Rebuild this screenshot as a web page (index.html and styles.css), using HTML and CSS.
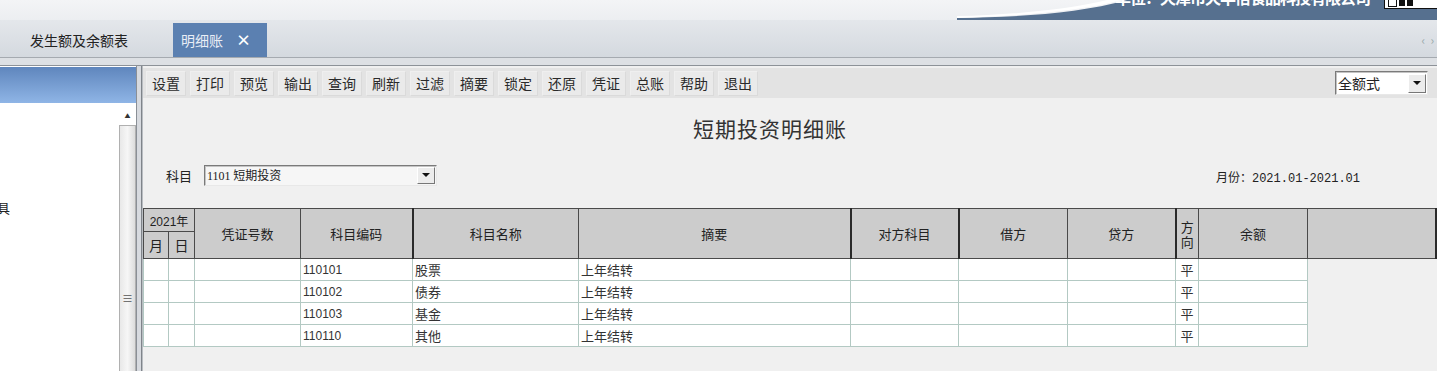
FILE: index.html
```html
<!DOCTYPE html>
<html lang="zh-CN">
<head>
  <meta charset="UTF-8" />
  <title>明细账</title>
  <link rel="stylesheet" href="styles.css">
</head>
<body>

  <div class="top">
    <div class="banner">
      <svg class="swoosh" width="480" height="20" viewBox="0 0 480 20">
        <path d="M0 20 L0 18 C60 17 120 14 170 0 L480 0 L480 20 Z" fill="#56708f"/>
        <path d="M0 18 C60 16 120 12 165 0 L150 0 C110 10 50 15 0 16 Z" fill="#ffffff"/>
      </svg>
      <span class="unit">单位：天津市天丰倍食品科技有限公司</span>
      <span class="winbox"><i class="sq"></i><i class="blk"></i><i class="blk"></i></span>
    </div>
  </div>

  <div class="tabs">
    <span class="tab">发生额及余额表</span>
    <span class="tab active">明细账<b class="close">×</b></span>
    <span class="arrows">‹ &nbsp;› &nbsp;›</span>
  </div>
  <div class="rule"></div>

  <div class="work">
    <div class="side">
      <div class="side-head"></div>
      <div class="side-body">
        <div class="side-list">
          <span class="item">具</span>
        </div>
        <div class="vscroll">
          <div class="up">▲</div>
          <div class="thumb"><span class="grip">≡</span></div>
        </div>
      </div>
    </div>
    <div class="split"></div>

    <div class="main">
      <div class="toolbar">
        <div class="btns">
          <span class="btn">设置</span>
          <span class="btn">打印</span>
          <span class="btn">预览</span>
          <span class="btn">输出</span>
          <span class="btn">查询</span>
          <span class="btn">刷新</span>
          <span class="btn">过滤</span>
          <span class="btn">摘要</span>
          <span class="btn">锁定</span>
          <span class="btn">还原</span>
          <span class="btn">凭证</span>
          <span class="btn">总账</span>
          <span class="btn">帮助</span>
          <span class="btn">退出</span>
        </div>
        <div class="combo mode">
          <span class="combo-text">全额式</span>
          <span class="drop"><i></i></span>
        </div>
      </div>

      <h1 class="title">短期投资明细账</h1>

      <div class="filter">
        <div class="subject">
          <span class="lbl">科目</span>
          <div class="combo acct">
            <span class="combo-text"><span class="num">1101</span> 短期投资</span>
            <span class="drop"><i></i></span>
          </div>
        </div>
        <div class="month">月份：<span class="mono">2021.01-2021.01</span></div>
      </div>

      <table class="ledger">
        <colgroup>
          <col style="width:25px"><col style="width:26px"><col style="width:106px">
          <col style="width:112px"><col style="width:166px"><col style="width:272px">
          <col style="width:108px"><col style="width:109px"><col style="width:108px">
          <col style="width:23px"><col style="width:109px"><col>
        </colgroup>
        <thead>
          <tr class="h1">
            <th colspan="2" class="year">2021年</th>
            <th rowspan="2">凭证号数</th>
            <th rowspan="2" class="thick">科目编码</th>
            <th rowspan="2">科目名称</th>
            <th rowspan="2" class="thick">摘要</th>
            <th rowspan="2" class="thick">对方科目</th>
            <th rowspan="2">借方</th>
            <th rowspan="2" class="thick">贷方</th>
            <th rowspan="2" class="dir">方<br>向</th>
            <th rowspan="2">余额</th>
            <th rowspan="2" class="thick"></th>
          </tr>
          <tr class="h2">
            <th>月</th>
            <th>日</th>
          </tr>
        </thead>
        <tbody>
          <tr><td></td><td></td><td></td><td class="num">110101</td><td>股票</td><td>上年结转</td><td></td><td></td><td></td><td class="c">平</td><td></td><td class="blank"></td></tr>
          <tr><td></td><td></td><td></td><td class="num">110102</td><td>债券</td><td>上年结转</td><td></td><td></td><td></td><td class="c">平</td><td></td><td class="blank"></td></tr>
          <tr><td></td><td></td><td></td><td class="num">110103</td><td>基金</td><td>上年结转</td><td></td><td></td><td></td><td class="c">平</td><td></td><td class="blank"></td></tr>
          <tr><td></td><td></td><td></td><td class="num">110110</td><td>其他</td><td>上年结转</td><td></td><td></td><td></td><td class="c">平</td><td></td><td class="blank"></td></tr>
        </tbody>
      </table>
    </div>
  </div>

</body>
</html>
```

FILE: styles.css
```css
body {
  margin: 0;
  height: 371px;
  overflow: hidden;
  font-family: "Noto Sans CJK SC", "Liberation Sans", sans-serif;
  font-size: 13px;
  color: #222;
  background: #f0f0f0;
}

/* top strip */
.top {
  position: relative;
  height: 20px;
  background: linear-gradient(#f3f4f6, #eceef1);
  overflow: hidden;
}
.banner {
  position: absolute;
  top: 0;
  right: 0;
  width: 480px;
  height: 20px;
  display: flex;
  justify-content: flex-end;
  align-items: flex-start;
}
.swoosh {
  position: absolute;
  left: 0;
  top: 0;
}
.unit {
  position: relative;
  margin-top: -12px;
  margin-right: 14px;
  font-size: 16px;
  font-weight: bold;
  line-height: 18px;
  color: #fff;
  letter-spacing: -1px;
}
.winbox {
  position: relative;
  width: 50px;
  height: 8px;
  margin-right: -2px;
  background: #fff;
  border: 1px solid #111;
  border-top: none;
  display: flex;
  gap: 2px;
  padding-left: 3px;
}
.winbox .sq {
  width: 7px;
  height: 6px;
  border: 1px solid #111;
  border-top: none;
}
.winbox .blk {
  width: 6px;
  height: 6px;
  background: #111;
}

/* tab bar */
.tabs {
  height: 37px;
  background: linear-gradient(#e4e7eb, #d4d9df);
  border-bottom: 1px solid #a5aab0;
  display: flex;
  align-items: flex-end;
  position: relative;
}
.tab {
  height: 34px;
  line-height: 34px;
  font-size: 14px;
  color: #222;
  padding: 0 45px 0 30px;
  white-space: nowrap;
}
.tab.active {
  background: #5b80b1;
  color: #e9eef6;
  padding: 0 16px 0 8px;
}
.close {
  margin-left: 13px;
  font-size: 15px;
  color: #fff;
}
.arrows {
  margin-left: auto;
  margin-right: -6px;
  height: 34px;
  line-height: 34px;
  color: #9aa;
  font-size: 12px;
  white-space: nowrap;
}
.rule {
  height: 7px;
  background: #dde0e4;
  border-bottom: 1px solid #8d9298;
}

/* work area */
.work {
  display: flex;
  height: 305px;
}
.side {
  width: 136px;
  background: #fff;
  border-right: 1px solid #8a8f96;
  display: flex;
  flex-direction: column;
}
.side-head {
  height: 36px;
  margin-top: 1px;
  background: linear-gradient(#5f86bd, #8fb5e6);
}
.side-body {
  flex: 1;
  display: flex;
}
.side-list {
  flex: 1;
  padding-top: 95px;
}
.item {
  margin-left: -3px;
  font-size: 13px;
}
.vscroll {
  width: 17px;
  margin-top: 4px;
  display: flex;
  flex-direction: column;
}
.up {
  height: 18px;
  font-size: 6px;
  line-height: 18px;
  text-align: center;
  color: #333;
}
.thumb {
  flex: 1;
  background: linear-gradient(90deg, #e8e8e8, #f6f6f6 50%, #dcdcdc);
  border: 1px solid #b0b0b0;
  border-bottom: none;
  display: flex;
  justify-content: center;
  padding-top: 166px;
}
.grip {
  font-size: 11px;
  line-height: 12px;
  color: #555;
}
.split {
  width: 4px;
  background: #d7dadf;
  border-right: 1px solid #7f848a;
}
.main {
  flex: 1;
  border-left: 1px solid #b9bdc2;
  background: #f0f0f0;
}

/* toolbar */
.toolbar {
  height: 30px;
  margin-top: 2px;
  background: #e3e3e3;
  display: flex;
  align-items: center;
  justify-content: space-between;
  padding: 0 9px 0 3px;
}
.btns {
  display: flex;
  gap: 4px;
}
.btn {
  width: 38px;
  height: 23px;
  line-height: 23px;
  text-align: center;
  font-size: 14px;
  color: #2a2a2a;
  background: #eaeaea;
  border: 1px solid #efefef;
  border-right-color: #dadada;
  border-bottom-color: #dadada;
}

.combo {
  display: flex;
  align-items: center;
  background: #fff;
  border: 1px solid;
  border-color: #7a7a7a #e8e8e8 #e8e8e8 #7a7a7a;
  box-shadow: inset 1px 1px 0 #c4c4c4;
}
.combo-text {
  flex: 1;
  padding-left: 2px;
}
.drop {
  width: 16px;
  height: 17px;
  margin-right: 1px;
  background: #ececec;
  border: 1px solid;
  border-color: #fff #777 #777 #fff;
  display: flex;
  align-items: center;
  justify-content: center;
}
.drop i {
  width: 0;
  height: 0;
  border-left: 4px solid transparent;
  border-right: 4px solid transparent;
  border-top: 4px solid #111;
}
.mode {
  width: 91px;
  height: 22px;
  font-size: 14px;
}

.title {
  margin: 0;
  padding: 15px 40px 0 0;
  height: 31px;
  text-align: center;
  font-size: 21px;
  font-weight: normal;
  color: #333;
  letter-spacing: 1px;
}

.filter {
  display: flex;
  justify-content: space-between;
  align-items: center;
  margin-top: 20px;
  padding: 0 77px 0 23px;
  height: 22px;
}
.subject {
  display: flex;
  align-items: center;
  gap: 12px;
}
.lbl {
  font-size: 13px;
}
.acct {
  width: 231px;
  height: 19px;
  background: #f6f6f6;
  font-size: 12px;
}
.acct .drop {
  height: 15px;
}
.acct .num {
  font-family: "Liberation Serif", serif;
  font-size: 12px;
}
.month {
  margin-top: 4px;
  font-size: 12px;
}
.mono {
  font-family: "Liberation Mono", monospace;
  font-size: 12px;
}

/* ledger table */
.ledger {
  margin-top: 22px;
  width: 100%;
  border-collapse: collapse;
  table-layout: fixed;
}
.ledger th {
  background: #cccccc;
  border: 1px solid #4a4a4a;
  font-weight: normal;
  font-size: 13px;
  color: #222;
  padding: 0;
  text-align: center;
}
.ledger th.thick {
  border-right: 2px solid #2a2a2a;
}
.ledger .h1 th {
  height: 22px;
}
.ledger .h2 th {
  height: 26px;
  font-size: 14px;
}
.ledger th.year {
  font-size: 12px;
  font-family: "Liberation Sans", "Noto Sans CJK SC", sans-serif;
}
.ledger th.dir {
  line-height: 15px;
  font-size: 13px;
}
.ledger td {
  height: 21px;
  padding: 0 0 0 2px;
  background: #fff;
  border: 1px solid #b3c9c3;
  font-size: 13px;
  color: #333;
  white-space: nowrap;
}
.ledger td.num {
  font-family: "Liberation Sans", sans-serif;
  font-size: 12px;
}
.ledger td.c {
  text-align: center;
  padding: 0;
}
.ledger td.blank {
  background: #f0f0f0;
  border: none;
  border-left: 1px solid #b3c9c3;
}
```
